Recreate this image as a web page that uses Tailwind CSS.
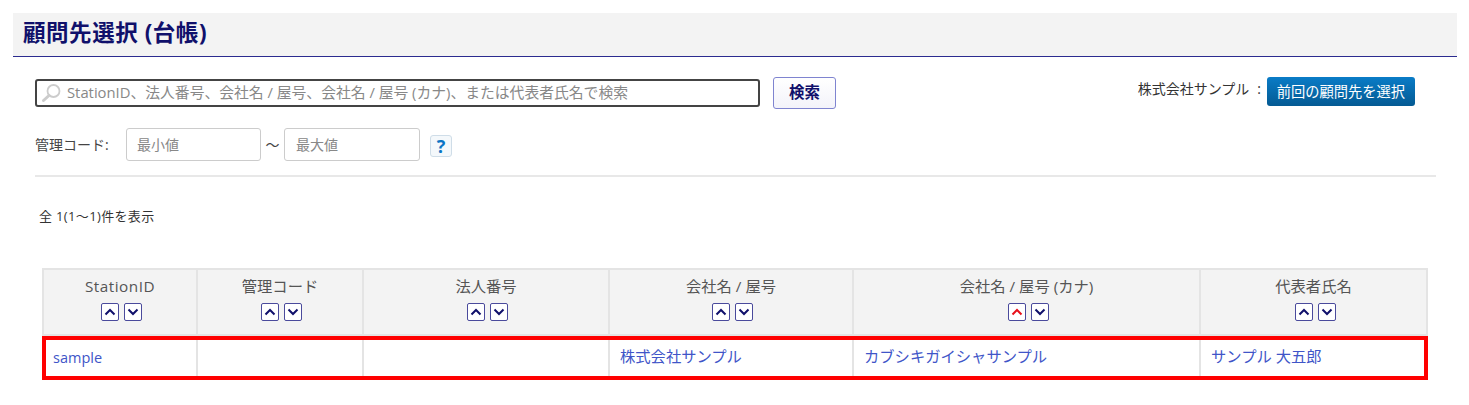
<!DOCTYPE html>
<html lang="ja">
<head>
<meta charset="utf-8">
<script src="https://cdn.jsdelivr.net/npm/@tailwindcss/browser@4"></script>
</head>
<body class="bg-white font-['Open_Sans','Noto_Sans_CJK_JP',sans-serif] text-[14px] text-[#444]">
<div class="h-[405px] overflow-hidden pt-[13px] pl-[13px] w-[1457px]">
  <h1 class="h-[44px] bg-[#f3f3f3] border-b border-[#2b2b8f] pl-[10px] pb-[3px] flex items-center text-[22.5px] font-bold text-[#10106b] tracking-[0.55px]">顧問先選択 (台帳)</h1>
  <div class="pl-[22px] pr-[21px]">
    <div class="flex items-start pt-[20px] h-[72px]">
      <div class="mt-[2px] w-[725px] h-[28px] border-2 border-[#444] rounded-[3px] flex items-center pl-[3px] text-[#888]">
        <svg width="24" height="20" viewBox="0 0 24 20" fill="none" class="shrink-0">
          <circle cx="13.5" cy="8" r="6" stroke="#ccc" stroke-width="1.8"/>
          <path d="M9 12.5L3.5 17.5" stroke="#ccc" stroke-width="3" stroke-linecap="round"/>
        </svg>
        <span class="ml-[3px] text-[14.8px] leading-[20px] mt-[-3px]">StationID、法人番号、会社名 / 屋号、会社名 / 屋号 (カナ)、または代表者氏名で検索</span>
      </div>
      <button class="ml-[13px] w-[63px] h-[32px] border border-[#7f84d0] rounded-[3px] bg-gradient-to-b from-white to-[#f3f3fa] text-[15.5px] font-bold text-[#10106b]">検索</button>
      <div class="ml-auto mr-[21px] flex items-start">
        <span class="text-[14px] text-[#333] mt-[1px]">株式会社サンプル</span>
        <span class="text-[14px] text-[#333] mt-[1px] ml-[8px] mr-[6px]">:</span>
        <button class="w-[148px] h-[29px] rounded-[3px] bg-gradient-to-b from-[#0a7cc7] to-[#045a93] text-white text-[14.25px]">前回の顧問先を選択</button>
      </div>
    </div>
    <div class="flex items-center h-[33px] mt-[-1px]">
      <span class="w-[91px] text-[#444]">管理コード:</span>
      <div class="w-[135px] h-[33px] border border-[#ccc] rounded-[3px] flex items-center pl-[10px] text-[#888]">最小値</div>
      <span class="w-[23px] text-center text-[#444]">〜</span>
      <div class="w-[136px] h-[33px] border border-[#ccc] rounded-[3px] flex items-center pl-[11px] text-[#888]">最大値</div>
      <span class="ml-[10px] w-[22px] h-[22px] mt-[3px] border border-[#cfdde8] rounded-[3px] bg-[#f4f8fb] flex items-center justify-center font-bold text-[18px] text-[#0a74c4]">?</span>
    </div>
    <div class="mt-[14px] h-[2px] bg-[#e8e8e8]"></div>
    <p class="mt-[31px] ml-[4px] text-[13px] leading-[16px] text-[#333] tracking-[0.35px]">全 1(1〜1)件を表示</p>
    <div class="relative ml-[7px] mt-[44px] w-[1386px]">
      <table class="w-[1386px] table-fixed border-separate border-spacing-0">
        <colgroup>
          <col class="w-[156px]"><col class="w-[166px]"><col class="w-[246px]"><col class="w-[244px]"><col class="w-[347px]"><col class="w-[227px]">
        </colgroup>
        <thead>
          <tr class="h-[68px] bg-[#f3f3f3] text-[#555] text-[15.3px]">
            <th class="border-2 border-[#e4e4e4] font-normal align-top pt-[5px] tracking-[0.5px]">StationID
              <div class="flex justify-center gap-[5px] mt-[5px] ml-[3px]">
                <span class="w-[18px] h-[18px] border border-[#4a4a9c] rounded-[2px] bg-white flex items-center justify-center"><svg width="12" height="8" viewBox="0 0 12 8" fill="none"><path d="M1.5 6.5L6 2L10.5 6.5" stroke="#10106b" stroke-width="2"/></svg></span>
                <span class="w-[18px] h-[18px] border border-[#4a4a9c] rounded-[2px] bg-white flex items-center justify-center"><svg width="12" height="8" viewBox="0 0 12 8" fill="none"><path d="M1.5 1.5L6 6L10.5 1.5" stroke="#10106b" stroke-width="2"/></svg></span>
              </div>
            </th>
            <th class="border-2 border-l-0 border-[#e4e4e4] font-normal align-top pt-[5px]">管理コード
              <div class="flex justify-center gap-[5px] mt-[5px] ml-[3px]">
                <span class="w-[18px] h-[18px] border border-[#4a4a9c] rounded-[2px] bg-white flex items-center justify-center"><svg width="12" height="8" viewBox="0 0 12 8" fill="none"><path d="M1.5 6.5L6 2L10.5 6.5" stroke="#10106b" stroke-width="2"/></svg></span>
                <span class="w-[18px] h-[18px] border border-[#4a4a9c] rounded-[2px] bg-white flex items-center justify-center"><svg width="12" height="8" viewBox="0 0 12 8" fill="none"><path d="M1.5 1.5L6 6L10.5 1.5" stroke="#10106b" stroke-width="2"/></svg></span>
              </div>
            </th>
            <th class="border-2 border-l-0 border-[#e4e4e4] font-normal align-top pt-[5px]">法人番号
              <div class="flex justify-center gap-[5px] mt-[5px] ml-[3px]">
                <span class="w-[18px] h-[18px] border border-[#4a4a9c] rounded-[2px] bg-white flex items-center justify-center"><svg width="12" height="8" viewBox="0 0 12 8" fill="none"><path d="M1.5 6.5L6 2L10.5 6.5" stroke="#10106b" stroke-width="2"/></svg></span>
                <span class="w-[18px] h-[18px] border border-[#4a4a9c] rounded-[2px] bg-white flex items-center justify-center"><svg width="12" height="8" viewBox="0 0 12 8" fill="none"><path d="M1.5 1.5L6 6L10.5 1.5" stroke="#10106b" stroke-width="2"/></svg></span>
              </div>
            </th>
            <th class="border-2 border-l-0 border-[#e4e4e4] font-normal align-top pt-[5px]">会社名 / 屋号
              <div class="flex justify-center gap-[5px] mt-[5px] ml-[3px]">
                <span class="w-[18px] h-[18px] border border-[#4a4a9c] rounded-[2px] bg-white flex items-center justify-center"><svg width="12" height="8" viewBox="0 0 12 8" fill="none"><path d="M1.5 6.5L6 2L10.5 6.5" stroke="#10106b" stroke-width="2"/></svg></span>
                <span class="w-[18px] h-[18px] border border-[#4a4a9c] rounded-[2px] bg-white flex items-center justify-center"><svg width="12" height="8" viewBox="0 0 12 8" fill="none"><path d="M1.5 1.5L6 6L10.5 1.5" stroke="#10106b" stroke-width="2"/></svg></span>
              </div>
            </th>
            <th class="border-2 border-l-0 border-[#e4e4e4] font-normal align-top pt-[5px]">会社名 / 屋号 (カナ)
              <div class="flex justify-center gap-[5px] mt-[5px] ml-[3px]">
                <span class="w-[18px] h-[18px] border border-[#4a4a9c] rounded-[2px] bg-white flex items-center justify-center"><svg width="12" height="8" viewBox="0 0 12 8" fill="none"><path d="M1.5 6.5L6 2L10.5 6.5" stroke="#e8111b" stroke-width="2"/></svg></span>
                <span class="w-[18px] h-[18px] border border-[#4a4a9c] rounded-[2px] bg-white flex items-center justify-center"><svg width="12" height="8" viewBox="0 0 12 8" fill="none"><path d="M1.5 1.5L6 6L10.5 1.5" stroke="#10106b" stroke-width="2"/></svg></span>
              </div>
            </th>
            <th class="border-2 border-l-0 border-[#e4e4e4] font-normal align-top pt-[5px]">代表者氏名
              <div class="flex justify-center gap-[5px] mt-[5px] ml-[3px]">
                <span class="w-[18px] h-[18px] border border-[#4a4a9c] rounded-[2px] bg-white flex items-center justify-center"><svg width="12" height="8" viewBox="0 0 12 8" fill="none"><path d="M1.5 6.5L6 2L10.5 6.5" stroke="#10106b" stroke-width="2"/></svg></span>
                <span class="w-[18px] h-[18px] border border-[#4a4a9c] rounded-[2px] bg-white flex items-center justify-center"><svg width="12" height="8" viewBox="0 0 12 8" fill="none"><path d="M1.5 1.5L6 6L10.5 1.5" stroke="#10106b" stroke-width="2"/></svg></span>
              </div>
            </th>
          </tr>
        </thead>
        <tbody>
          <tr class="h-[44px] text-[15.3px] text-[#4055c8]">
            <td class="border-r-2 border-[#e4e4e4] pl-[11px] pb-[1px] text-[14.5px]">sample</td>
            <td class="border-r-2 border-[#e4e4e4]"></td>
            <td class="border-r-2 border-[#e4e4e4]"></td>
            <td class="border-r-2 border-[#e4e4e4] pl-[10px] pb-[4px]">株式会社サンプル</td>
            <td class="border-r-2 border-[#e4e4e4] pl-[10px] pb-[4px]">カブシキガイシャサンプル</td>
            <td class="border-r-2 border-[#e4e4e4] pl-[10px] pb-[4px]">サンプル 大五郎</td>
          </tr>
        </tbody>
      </table>
      <div class="absolute left-0 right-0 top-[68px] h-[44px] border-4 border-[#ff0000] pointer-events-none"></div>
    </div>
  </div>
</div>
</body>
</html>
